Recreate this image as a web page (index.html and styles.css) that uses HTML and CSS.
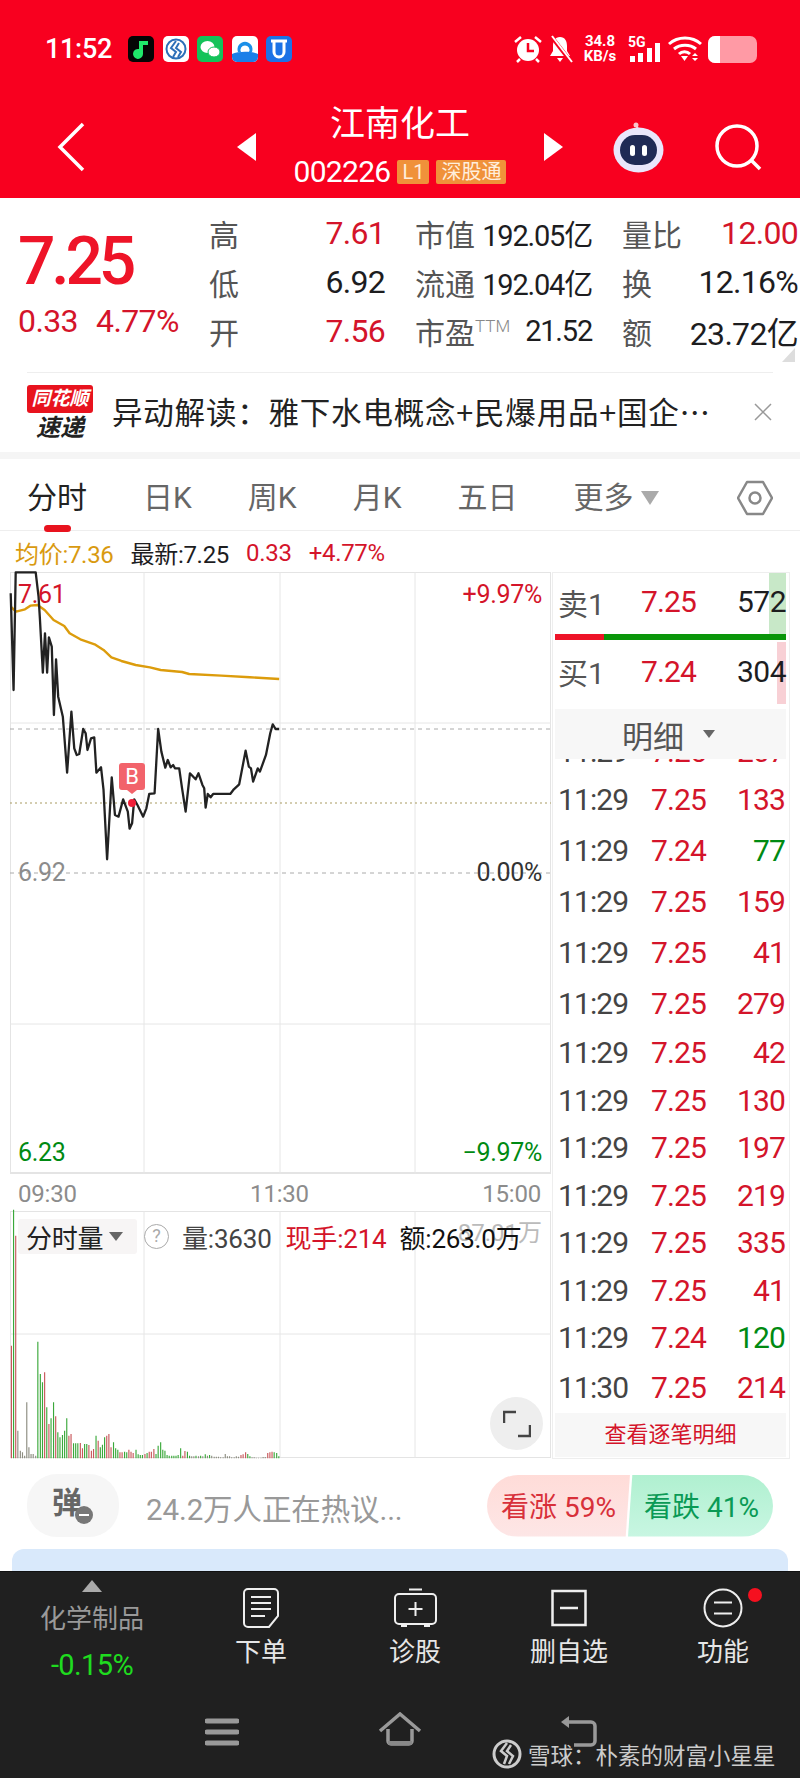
FILE: index.html
```html
<!DOCTYPE html>
<html lang="zh-CN">
<head>
    <meta charset="UTF-8">
    <title>江南化工</title>
    <link rel="stylesheet" href="styles.css">
</head>
<body>
<div class="page">

    <header class="header">
        <div class="status">
            <span class="clock">11:52</span>
            <div class="apps">
                <svg class="app" viewBox="0 0 26 26"><rect width="26" height="26" rx="5" fill="#050505"/><path d="M11 5h9v4h-5v9a5 5 0 1 1-4-5z" fill="#1fe86a"/></svg>
                <svg class="app" viewBox="0 0 26 26"><rect width="26" height="26" rx="5" fill="#fff"/><circle cx="13" cy="13" r="9.5" fill="none" stroke="#2d6fb8" stroke-width="2"/><path d="M13 5 8 12l5 4-3 5M16 7l-3 5 5 4-3 5" fill="none" stroke="#2d6fb8" stroke-width="2"/></svg>
                <svg class="app" viewBox="0 0 26 26"><rect width="26" height="26" rx="5" fill="#14c35a"/><ellipse cx="10.5" cy="11" rx="7" ry="6" fill="#fff"/><ellipse cx="17" cy="16" rx="6" ry="5" fill="#fff" stroke="#14c35a"/></svg>
                <svg class="app" viewBox="0 0 26 26"><rect width="26" height="26" rx="5" fill="#fff"/><path d="M0 18c6-3 20-3 26 0v3a5 5 0 0 1-5 5H5a5 5 0 0 1-5-5z" fill="#1a7fe8"/><path d="M6 16a7.5 7.5 0 1 1 14 0h-3a4.5 4.5 0 1 0-8 0z" fill="#1a8fe8"/></svg>
                <svg class="app" viewBox="0 0 26 26"><rect width="26" height="26" rx="5" fill="#1c72e6"/><path d="M8 6v10a5 5 0 0 0 10 0V6M5 5h16" fill="none" stroke="#fff" stroke-width="3"/></svg>
            </div>
            <div class="sysicons">
                <svg class="alarm" viewBox="0 0 30 28"><circle cx="15" cy="15" r="11" fill="#fff"/><path d="M15 8v8h6" fill="none" stroke="#f8001f" stroke-width="2.5"/><path d="M2 7l6-5M28 7l-6-5M7 24l-3 3M23 24l3 3" stroke="#fff" stroke-width="2.5"/></svg>
                <svg class="bell" viewBox="0 0 25 28"><path d="M12 2c5 0 7 4 7 9v5l3 5H2l3-5v-5c0-5 2-9 7-9zM9 23h6l-3 4z" fill="#fff"/><path d="M3 1l20 26" stroke="#f8001f" stroke-width="4"/><path d="M4 1l20 26" stroke="#fff" stroke-width="2"/></svg>
                <div class="speed"><span>34.8</span><span>KB/s</span></div>
                <div class="signal">
                    <span class="five-g">5G</span>
                    <svg class="bars" viewBox="0 0 30 19"><path d="M0 13h5v6H0zM8 10h5v9H8zM17 5h5v14h-5zM25 0h5v19h-5z" fill="#fff"/></svg>
                </div>
                <svg class="wifi" viewBox="0 0 34 26"><g fill="none" stroke="#fff" stroke-width="3"><path d="M1 8c9-8 23-8 32 0"/><path d="M6 13c6-5 16-5 22 0"/><path d="M11 18c3-3 8-3 11 0"/></g><path d="M13 20h7l-3.5 5z" fill="#fff"/><path d="M24 20l3-3 3 3zM24 22h6l-3 3z" fill="#fff"/></svg>
                <div class="battery"><div class="battery-level"></div></div>
            </div>
        </div>
        <nav class="nav">
            <svg class="back" viewBox="0 0 28 50"><path d="M26 2 3 25l23 23" fill="none" stroke="#fff" stroke-width="3.5"/></svg>
            <span class="tri tri-left"></span>
            <div class="stock">
                <div class="stock-name">江南化工</div>
                <div class="stock-code">
                    <span class="code">002226</span>
                    <span class="badge badge-l1">L1</span>
                    <span class="badge badge-sz">深股通</span>
                </div>
            </div>
            <span class="tri tri-right"></span>
            <svg class="robot" viewBox="0 0 53 52"><circle cx="24" cy="4" r="2.5" fill="#f9c6cc"/><path d="M24 4c1 3 2 4 3 5" stroke="#f9c6cc" stroke-width="2" fill="none"/><ellipse cx="26.5" cy="29" rx="25" ry="22.5" fill="#e9e6fb"/><rect x="8" y="14" width="37" height="30" rx="15" fill="#1f2a55"/><rect x="18" y="24" width="5" height="11" rx="2.5" fill="#fff"/><rect x="30" y="24" width="5" height="11" rx="2.5" fill="#fff"/></svg>
            <svg class="search" viewBox="0 0 47 47"><circle cx="22" cy="22" r="20" fill="none" stroke="#fff" stroke-width="3.5"/><path d="M36 36l9 9" stroke="#fff" stroke-width="3.5"/></svg>
        </nav>
    </header>

    <section class="quote">
        <div class="price-box">
            <div class="price">7.25</div>
            <div class="change"><span>0.33</span><span>4.77%</span></div>
        </div>
        <div class="stats">
            <div class="stat"><span class="stat-label">高</span><span class="num red">7.61</span></div>
            <div class="stat"><span class="stat-label">市值</span><span class="num dark small">192.05亿</span></div>
            <div class="stat"><span class="stat-label">量比</span><span class="num red">12.00</span></div>
            <div class="stat"><span class="stat-label">低</span><span class="num dark">6.92</span></div>
            <div class="stat"><span class="stat-label">流通</span><span class="num dark small">192.04亿</span></div>
            <div class="stat"><span class="stat-label">换</span><span class="num dark">12.16%</span></div>
            <div class="stat"><span class="stat-label">开</span><span class="num red">7.56</span></div>
            <div class="stat"><span class="stat-label">市盈<sup class="ttm">TTM</sup></span><span class="num dark small">21.52</span></div>
            <div class="stat"><span class="stat-label">额</span><span class="num dark">23.72亿</span></div>
        </div>
        <span class="corner"></span>
    </section>

    <section class="news">
        <div class="news-logo">
            <div class="news-logo-top">同花顺</div>
            <div class="news-logo-bottom">速递</div>
        </div>
        <div class="news-text">异动解读：雅下水电概念+民爆用品+国企⋯</div>
        <svg class="news-close" viewBox="0 0 18 18"><path d="M1 1l16 16M17 1 1 17" stroke="#999" stroke-width="1.5"/></svg>
    </section>

    <nav class="tabs">
        <span class="tab active">分时</span>
        <span class="tab">日K</span>
        <span class="tab">周K</span>
        <span class="tab">月K</span>
        <span class="tab">五日</span>
        <span class="tab">更多<i class="tab-arrow"></i></span>
        <svg class="tab-gear" viewBox="0 0 36 36"><path d="M10 2h16l9 16-9 16H10L1 18z" fill="none" stroke="#888" stroke-width="2.5" stroke-linejoin="round"/><circle cx="18" cy="18" r="5.5" fill="none" stroke="#888" stroke-width="2.5"/></svg>
    </nav>

    <div class="main">
        <div class="charts">
            <div class="legend">
                <span class="orange">均价:7.36</span>
                <span class="dark">最新:7.25</span>
                <span class="red">0.33</span>
                <span class="red">+4.77%</span>
            </div>

            <div class="plot">
                <svg class="plot-svg" viewBox="0 0 541 602">
                    <path class="grid" d="M134 0V602M270 0V602M405 0V602M0 151H541M0 452H541"/>
                    <path class="dash-grey" d="M0 157H541M0 301H541"/>
                    <path class="dash-gold" d="M0 231H541"/>
                    <g transform="translate(-10 -32) scale(.357 .3333)">
                        <path class="avg-line" d="M30 200 45 215 70 208 85 197 105 195 125 210 150 240 180 258 195 280 225 298 265 313 290 330 312 352 340 363 380 375 420 382 450 390 510 396 530 402 620 407 700 412 782 417"/>
                        <path class="price-line" d="M30 160 38 450 44 97 100 97 108 170 112 240 120 398 126 280 132 398 137 292 145 320 151 525 157 358 163 470 176 530 188 698 200 515 208 625 215 645 222 642 233 567 240 580 245 630 255 595 264 592 270 698 283 682 290 750 300 958 313 712 322 825 332 830 345 778 358 815 363 866 370 850 376 778 385 795 401 830 410 805 418 762 433 760 443 567 452 635 463 683 470 660 478 682 485 675 490 685 502 685 510 745 520 815 532 700 548 718 556 700 567 735 572 745 576 803 582 762 590 772 597 762 645 762 655 748 670 733 688 632 697 680 703 685 709 725 722 685 728 695 745 645 757 580 764 553 772 567 782 567"/>
                    </g>
                    <circle cx="122" cy="231" r="4" fill="#f0203a"/>
                </svg>
                <span class="plot-label tl red">7.61</span>
                <span class="plot-label tr red">+9.97%</span>
                <span class="plot-label ml grey">6.92</span>
                <span class="plot-label mr">0.00%</span>
                <span class="plot-label bl green">6.23</span>
                <span class="plot-label br green">−9.97%</span>
                <span class="buy-mark">B</span>
            </div>

            <div class="axis"><span>09:30</span><span>11:30</span><span>15:00</span></div>

            <div class="volume">
                <svg class="plot-svg" viewBox="0 0 541 247">
                    <path class="grid" d="M134 0V247M270 0V247M405 0V247M0 123H541"/>
                    <g transform="translate(-10 -32) scale(.357 .3333)">
                        <path class="vol-bar vol-red" d="M32 500V838M44 170V838M125 580V838M137 735V838M156 712V838M193 770V838M199 765V838M225 792V838M231 808V838M249 798V838M256 815V838M262 810V838M275 785V838M299 770V838M305 765V838M311 805V838M336 820V838M342 820V838M361 812V838M367 818V838M373 822V838M406 825V838M418 818V838M424 818V838M431 810V838M512 830V838M518 816V838M675 828V838M681 826V838M688 820V838M750 822V838M756 820V838M762 818V838"/>
                        <path class="vol-bar vol-green" d="M38 92V838M106 488V838M113 585V838M119 610V838M131 685V838M143 718V838M150 670V838M162 760V838M168 775V838M175 768V838M181 755V838M187 718V838M206 793V838M212 793V838M218 793V838M237 795V838M243 795V838M269 770V838M281 805V838M287 797V838M293 775V838M318 790V838M324 808V838M330 812V838M349 818V838M355 820V838M381 812V838M387 826V838M393 828V838M399 828V838M412 822V838M437 825V838M443 800V838M450 790V838M456 812V838M462 815V838M468 828V838M474 830V838M481 830V838M487 830V838M493 830V838M499 828V838M506 808V838M525 818V838M531 830V838M549 830V838M562 830V838M575 826V838M587 828V838M694 825V838M700 832V838M768 820V838M775 822V838M781 832V838"/>
                        <path class="vol-bar vol-grey" d="M50 755V838M57 815V838M63 820V838M69 830V838M75 670V838M81 805V838M87 825V838M93 825V838M100 830V838M537 832V838M543 832V838M556 832V838M568 832V838M581 830V838M593 830V838M600 833V838M606 833V838M612 833V838M618 835V838M625 835V838M631 825V838M637 832V838M643 832V838M649 835V838M656 835V838M662 832V838M668 833V838M706 835V838M712 835V838M718 836V838M724 836V838M731 836V838M737 834V838M743 834V838"/>
                    </g>
                </svg>
                <span class="vol-ghost">87.01万</span>
                <div class="vol-head">
                    <span class="vol-type">分时量<i class="vol-arrow"></i></span>
                    <span class="vol-help">?</span>
                    <span class="vol-num">量:3630</span>
                    <span class="vol-now red">现手:214</span>
                    <span class="vol-amount">额:263.0万</span>
                </div>
                <div class="fullscreen">
                    <svg viewBox="0 0 28 28"><path d="M1 13V2h12M27 15v11H15" fill="none" stroke="#444" stroke-width="2.5"/></svg>
                </div>
            </div>
        </div>

        <aside class="side">
            <div class="book book-sell">
                <span class="book-depth depth-green"></span>
                <span class="book-label">卖1</span><span class="book-price red">7.25</span><span class="book-vol">572</span>
            </div>
            <div class="book-bar"><span class="book-bar-red"></span></div>
            <div class="book book-buy">
                <span class="book-depth depth-pink"></span>
                <span class="book-label">买1</span><span class="book-price red">7.24</span><span class="book-vol">304</span>
            </div>
            <div class="detail-head">明细<i class="detail-arrow"></i></div>
            <div class="trades">
                <div class="trade first"><span class="t">11:29</span><span class="p">7.25</span><span class="v red">207</span></div>
                <div class="trade"><span class="t">11:29</span><span class="p">7.25</span><span class="v red">133</span></div>
                <div class="trade"><span class="t">11:29</span><span class="p">7.24</span><span class="v green">77</span></div>
                <div class="trade"><span class="t">11:29</span><span class="p">7.25</span><span class="v red">159</span></div>
                <div class="trade"><span class="t">11:29</span><span class="p">7.25</span><span class="v red">41</span></div>
                <div class="trade"><span class="t">11:29</span><span class="p">7.25</span><span class="v red">279</span></div>
                <div class="trade tight"><span class="t">11:29</span><span class="p">7.25</span><span class="v red">42</span></div>
                <div class="trade tight"><span class="t">11:29</span><span class="p">7.25</span><span class="v red">130</span></div>
                <div class="trade tight"><span class="t">11:29</span><span class="p">7.25</span><span class="v red">197</span></div>
                <div class="trade tight"><span class="t">11:29</span><span class="p">7.25</span><span class="v red">219</span></div>
                <div class="trade tight"><span class="t">11:29</span><span class="p">7.25</span><span class="v red">335</span></div>
                <div class="trade tight"><span class="t">11:29</span><span class="p">7.25</span><span class="v red">41</span></div>
                <div class="trade tight"><span class="t">11:29</span><span class="p">7.24</span><span class="v green">120</span></div>
                <div class="trade"><span class="t">11:30</span><span class="p">7.25</span><span class="v red">214</span></div>
            </div>
            <div class="detail-link">查看逐笔明细</div>
        </aside>
    </div>

    <section class="talk">
        <div class="danmu">弹<span class="danmu-minus"></span></div>
        <div class="talk-text">24.2万人正在热议...</div>
        <div class="vote">
            <span class="vote-up">看涨 59%</span>
            <span class="vote-down">看跌 41%</span>
        </div>
    </section>
    <div class="blue-card"></div>

    <footer class="footer">
        <div class="actions">
            <div class="sector">
                <span class="sector-arrow"></span>
                <span class="sector-name">化学制品</span>
                <span class="sector-change">-0.15%</span>
            </div>
            <div class="action">
                <svg class="action-icon" width="36" height="40" viewBox="0 0 36 40"><path d="M5 1h26a4 4 0 0 1 4 4v23l-9 11H5a4 4 0 0 1-4-4V5a4 4 0 0 1 4-4zM8 9h20M8 15h20M8 21h20M8 28h14" fill="none" stroke="#eee" stroke-width="2"/></svg>
                <span>下单</span>
            </div>
            <div class="action">
                <svg class="action-icon" width="45" height="40" viewBox="0 0 45 40"><path d="M16 1.5h13M6 6h33a4 4 0 0 1 4 4v22a4 4 0 0 1-4 4H6a4 4 0 0 1-4-4V10a4 4 0 0 1 4-4zM8 38h6M31 38h6M22.5 14v14M15.500 21h14" fill="none" stroke="#eee" stroke-width="2"/></svg>
                <span>诊股</span>
            </div>
            <div class="action">
                <svg class="action-icon" width="36" height="40" viewBox="0 0 36 40"><path d="M1.5 3h33v34h-33zM9 20h18" fill="none" stroke="#eee" stroke-width="2.5"/></svg>
                <span>删自选</span>
            </div>
            <div class="action">
                <svg class="action-icon" width="40" height="40" viewBox="0 0 40 40"><circle cx="20" cy="20" r="18.5" fill="none" stroke="#eee" stroke-width="2"/><path d="M11 14.5h18M11 25.5h18" stroke="#eee" stroke-width="2"/></svg>
                <span class="red-dot"></span>
                <span>功能</span>
            </div>
        </div>
        <div class="sysnav">
            <svg class="nav-menu" viewBox="0 0 34 28"><path d="M2 3h30M2 14h30M2 25h30" stroke="#999" stroke-width="5" stroke-linecap="round"/></svg>
            <svg class="nav-home" viewBox="0 0 44 34"><path d="M2 19 22 2l20 17M10 17v12a3 3 0 0 0 3 3h18a3 3 0 0 0 3-3V17" fill="none" stroke="#999" stroke-width="3.5"/><path d="M10 31h24" stroke="#888" stroke-width="4"/></svg>
            <svg class="nav-back" viewBox="0 0 38 32"><path d="M9 1 1 7l8 6z" fill="#999"/><path d="M6 7h25a4 4 0 0 1 4 4v15a4 4 0 0 1-4 4H14" fill="none" stroke="#999" stroke-width="3.5"/></svg>
        </div>
        <div class="watermark">
            <svg viewBox="0 0 30 30"><circle cx="15" cy="15" r="13" fill="none" stroke="#ccc" stroke-width="3"/><path d="M15 4 9 12l6 5-3 8M19 6l-4 6 6 5-4 8" fill="none" stroke="#ccc" stroke-width="2.5"/></svg>
            <span>雪球：朴素的财富小星星</span>
        </div>
    </footer>
</div>
</body>
</html>
```

FILE: styles.css
```css
* {
    margin: 0;
    padding: 0;
    box-sizing: border-box;
}
body {
    font-family: Roboto, "Noto Sans CJK SC", sans-serif;
    background: #fff;
    color: #222;
}
.page {
    position: relative;
    width: 800px;
    height: 1778px;
    overflow: hidden;
    background: #fff;
}
.red { color: #d4142a; }
.green { color: #008a12; }
.grey { color: #8c8c8c; }
.dark { color: #1d1d1f; }
.orange { color: #d99a10; }

/* header */
.header {
    height: 198px;
    background: #f8001f;
    color: #fff;
}
.status {
    display: flex;
    align-items: center;
    height: 62px;
    padding: 36px 0 0 45px;
}
.clock {
    width: 83px;
    font-size: 27px;
    font-weight: 500;
    letter-spacing: -0.3px;
}
.apps {
    display: flex;
    gap: 8.5px;
}
.app {
    width: 26px;
    height: 26px;
}
.sysicons {
    display: flex;
    align-items: center;
    margin-left: 221px;
}
.alarm { width: 30px; height: 28px; }
.bell { width: 25px; height: 28px; margin-left: 5px; }
.speed {
    display: flex;
    flex-direction: column;
    align-items: center;
    width: 36px;
    margin-left: 9px;
    font-size: 15px;
    font-weight: 700;
    line-height: 15px;
}
.signal {
    position: relative;
    width: 32px;
    height: 26px;
    margin-left: 10px;
}
.five-g {
    position: absolute;
    top: -2px;
    left: 0;
    font-size: 14px;
    font-weight: 700;
}
.bars {
    position: absolute;
    right: 0;
    bottom: 0;
    width: 30px;
    height: 19px;
}
.wifi { width: 34px; height: 26px; margin-left: 8px; }
.battery {
    width: 49px;
    height: 27px;
    margin-left: 6px;
    border-radius: 7px;
    overflow: hidden;
    background: #ff9aa5;
}
.battery-level {
    width: 12px;
    height: 100%;
    background: #fff;
}
.nav {
    display: flex;
    align-items: center;
    height: 90px;
    margin-top: 40px;
    padding-left: 57px;
}
.back { width: 28px; height: 50px; flex: none; }
.tri {
    flex: none;
    width: 0;
    height: 0;
    border-top: 14px solid transparent;
    border-bottom: 14px solid transparent;
}
.tri-left {
    margin-left: 152px;
    border-right: 19px solid #fff;
}
.tri-right {
    border-left: 19px solid #fff;
}
.stock {
    flex: none;
    width: 288px;
    margin-top: -3px;
    text-align: center;
}
.stock-name {
    height: 52px;
    font-size: 35px;
    line-height: 44px;
}
.stock-code {
    display: flex;
    align-items: center;
    justify-content: center;
    gap: 7px;
    height: 34px;
}
.code {
    font-size: 30px;
    letter-spacing: -0.7px;
}
.badge {
    height: 24px;
    padding: 0 5px;
    border-radius: 2px;
    background: #f0913a;
    color: #ffeedd;
    font-size: 20px;
    line-height: 24px;
}
.robot { width: 53px; height: 52px; margin-left: 49px; flex: none; }
.search { width: 47px; height: 47px; margin-left: 50px; flex: none; }

/* quote */
.quote {
    position: relative;
    display: flex;
    height: 174px;
    padding: 10px 0 0 18px;
}
.price-box { width: 191px; flex: none; }
.price {
    height: 86px;
    margin-top: 2px;
    color: #ee1428;
    font-size: 66px;
    font-weight: 500;
    line-height: 104px;
    letter-spacing: -4.2px;
}
.change {
    display: flex;
    gap: 18px;
    margin-top: 5px;
    color: #d4142a;
    font-size: 32px;
    line-height: 40px;
    letter-spacing: -0.6px;
}
.stats {
    display: grid;
    grid-template-columns: 176px 177px 176px;
    grid-auto-rows: 49px;
    column-gap: 30px;
    width: 589px;
    flex: none;
}
.stat {
    display: flex;
    align-items: center;
    justify-content: space-between;
    white-space: nowrap;
}
.stat-label {
    color: #555;
    font-size: 30px;
}
.num {
    font-size: 32px;
    letter-spacing: -0.7px;
}
.num.small {
    font-size: 29px;
    letter-spacing: -1.2px;
}
.ttm {
    color: #888;
    font-size: 17px;
    font-weight: 300;
    vertical-align: 12px;
    line-height: 0;
}
.corner {
    position: absolute;
    right: 5px;
    bottom: 10px;
    width: 0;
    height: 0;
    border-left: 13px solid transparent;
    border-bottom: 14px solid #ddd;
}

/* news */
.news {
    position: relative;
    display: flex;
    align-items: center;
    height: 80px;
    margin: 0 27px;
    border-top: 1px solid #eee;
}
.news-logo {
    flex: none;
    width: 66px;
    text-align: center;
}
.news-logo-top {
    height: 28px;
    border-radius: 3px;
    background: #e8131e;
    color: #fff;
    font-size: 19px;
    font-weight: 700;
    font-style: italic;
    line-height: 28px;
    white-space: nowrap;
}
.news-logo-bottom {
    margin-top: 2px;
    color: #222;
    font-size: 24px;
    font-weight: 700;
    font-style: italic;
    line-height: 26px;
}
.news-text {
    margin: -4px 0 0 19px;
    font-family: "Noto Sans CJK SC", sans-serif;
    font-size: 30.5px;
    letter-spacing: 0.8px;
    white-space: nowrap;
    line-height: 44px;
}
.news-close {
    position: absolute;
    right: 1px;
    top: 30px;
    width: 18px;
    height: 18px;
}

/* tabs */
.tabs {
    display: flex;
    align-items: center;
    gap: 56px;
    height: 79px;
    padding: 7px 27px 0 27px;
    border-top: 7px solid #f5f5f5;
    border-bottom: 1px solid #eee;
}
.tab {
    position: relative;
    display: flex;
    align-items: center;
    color: #666;
    font-size: 30px;
    line-height: 40px;
    white-space: nowrap;
}
.tab.active { color: #222; }
.tab.active::after {
    content: "";
    position: absolute;
    left: 17px;
    bottom: -14px;
    width: 27px;
    height: 7px;
    border-radius: 4px;
    background: #e8131e;
}
.tab-arrow {
    margin-left: 8px;
    border-left: 9px solid transparent;
    border-right: 9px solid transparent;
    border-top: 14px solid #aaa;
}
.tab-gear {
    width: 36px;
    height: 36px;
    margin-left: auto;
}

/* charts */
.main {
    display: flex;
    height: 928px;
}
.charts {
    flex: none;
    width: 552px;
}
.legend {
    display: flex;
    align-items: center;
    gap: 17px;
    height: 41px;
    padding: 2px 0 0 15px;
    font-size: 24px;
    letter-spacing: -0.3px;
}
.plot {
    position: relative;
    width: 541px;
    height: 602px;
    margin-left: 10px;
    border: 1px solid #e4e4e4;
    border-bottom-width: 2px;
}
.plot-svg {
    position: absolute;
    top: -1px;
    left: -1px;
    width: 541px;
    height: 602px;
    overflow: visible;
}
.volume .plot-svg { height: 247px; }
.grid {
    fill: none;
    stroke: #e6e6e6;
    stroke-width: 1;
}
.dash-grey {
    fill: none;
    stroke: #aaa;
    stroke-width: 1;
    stroke-dasharray: 4 4;
}
.dash-gold {
    fill: none;
    stroke: #a89a60;
    stroke-width: 1;
    stroke-dasharray: 2 3;
}
.avg-line, .price-line {
    fill: none;
    vector-effect: non-scaling-stroke;
    stroke-linejoin: round;
}
.avg-line {
    stroke: #dc9c0c;
    stroke-width: 2.4px;
}
.price-line {
    stroke: #222;
    stroke-width: 2.3px;
}
.plot-label {
    position: absolute;
    font-size: 25px;
    line-height: 28px;
    letter-spacing: -0.3px;
}
.tl { left: 7px; top: 8px; }
.tr { right: 8px; top: 8px; }
.ml { left: 7px; top: 286px; }
.mr { right: 8px; top: 286px; color: #333; }
.bl { left: 7px; top: 566px; }
.br { right: 8px; top: 566px; }
.buy-mark {
    position: absolute;
    left: 108px;
    top: 190px;
    width: 26px;
    height: 27px;
    border-radius: 3px;
    background: #f2636b;
    color: #fff;
    font-size: 22px;
    line-height: 27px;
    text-align: center;
}
.buy-mark::after {
    content: "";
    position: absolute;
    left: 8px;
    bottom: -4px;
    border-left: 5px solid transparent;
    border-right: 5px solid transparent;
    border-top: 4px solid #f2636b;
}
.axis {
    display: flex;
    justify-content: space-between;
    align-items: center;
    height: 37px;
    padding: 3px 11px 0 18px;
    color: #8c8c8c;
    font-size: 24px;
    letter-spacing: -0.2px;
}
.volume {
    position: relative;
    width: 541px;
    height: 247px;
    margin-left: 10px;
    border: 1px solid #e4e4e4;
}
.vol-bar {
    fill: none;
    stroke-width: 3.2;
}
.vol-red { stroke: #c8575a; }
.vol-green { stroke: #3aa83a; }
.vol-grey { stroke: #8c8c80; }
.vol-ghost {
    position: absolute;
    right: 8px;
    top: 7px;
    color: #bbb;
    font-size: 24px;
    line-height: 28px;
}
.vol-head {
    position: absolute;
    top: 7px;
    left: 7px;
    display: flex;
    align-items: center;
    height: 35px;
    font-size: 26px;
    letter-spacing: -0.2px;
    white-space: nowrap;
}
.vol-type {
    display: flex;
    align-items: center;
    width: 119px;
    height: 35px;
    padding-left: 8px;
    border-radius: 3px;
    background: #f7f5f5;
    color: #222;
}
.vol-arrow {
    margin-left: 6px;
    border-left: 7px solid transparent;
    border-right: 7px solid transparent;
    border-top: 9px solid #666;
}
.vol-help {
    width: 25px;
    height: 25px;
    margin-left: 7px;
    border: 1.5px solid #aaa;
    border-radius: 50%;
    color: #aaa;
    font-size: 18px;
    line-height: 22px;
    text-align: center;
}
.vol-num { margin-left: 13px; color: #444; }
.vol-now { margin-left: 14px; }
.vol-amount { margin-left: 13px; color: #111; }
.fullscreen {
    position: absolute;
    left: 479px;
    top: 185px;
    display: flex;
    align-items: center;
    justify-content: center;
    width: 53px;
    height: 53px;
    border-radius: 50%;
    background: #eee;
}
.fullscreen svg { width: 28px; height: 28px; }

/* right panel */
.side {
    flex: none;
    width: 238px;
    height: 887px;
    margin-top: 41px;
    padding: 0 3px 0 2px;
    border: 1px solid #eee;
}
.book {
    position: relative;
    display: flex;
    align-items: center;
    height: 61px;
    padding: 0 0 4px 3px;
    font-size: 30px;
    white-space: nowrap;
}
.book-depth {
    position: absolute;
    top: 0;
    right: 0;
    height: 100%;
}
.depth-green { width: 17px; background: #c8e8c8; }
.depth-pink { width: 9px; background: #f8d0d5; }
.book-label { position: relative; width: 83px; color: #555; }
.book-price { position: relative; width: 53px; letter-spacing: -0.9px; }
.book-vol {
    position: relative;
    margin-left: auto;
    color: #1d1d1f;
    letter-spacing: -0.5px;
}
.book-bar {
    height: 6px;
    background: #0a960a;
}
.book-bar-red {
    display: block;
    width: 49px;
    height: 100%;
    background: #ee1428;
}
.book-buy { height: 62px; margin-top: 2px; }
.detail-head {
    display: flex;
    align-items: center;
    justify-content: center;
    height: 50px;
    margin-top: 5px;
    padding-right: 4px;
    background: #f7f7f7;
    color: #555;
    font-size: 31px;
}
.detail-arrow {
    margin-left: 19px;
    border-left: 6px solid transparent;
    border-right: 6px solid transparent;
    border-top: 8px solid #666;
}
.trades {
    height: 654px;
    overflow: hidden;
}
.trade {
    display: grid;
    grid-template-columns: 93px 53px 1fr;
    align-items: center;
    height: 51px;
    padding: 0 1px 0 3px;
    font-size: 30px;
    letter-spacing: -0.9px;
}
.trade.first { height: 45px; margin-top: -30px; }
.trade.tight { height: 47.5px; }
.trade .t { color: #444; }
.trade .p { color: #d4142a; }
.trade .v { text-align: right; }
.detail-link {
    height: 44px;
    background: #f7f7f7;
    color: #d4142a;
    font-size: 22px;
    line-height: 44px;
    text-align: center;
}

/* talk row */
.talk {
    display: flex;
    align-items: center;
    height: 87px;
    margin-top: 3px;
    padding: 0 27px;
}
.danmu {
    position: relative;
    flex: none;
    width: 92px;
    height: 63px;
    padding-left: 25px;
    border-radius: 30px;
    background: #f6f6f6;
    color: #666;
    font-size: 30px;
    font-weight: 700;
    line-height: 58px;
}
.danmu-minus {
    position: absolute;
    left: 48px;
    top: 32px;
    width: 18px;
    height: 18px;
    border-radius: 50%;
    background: #777;
}
.danmu-minus::after {
    content: "";
    position: absolute;
    left: 4px;
    top: 8px;
    width: 10px;
    height: 2px;
    background: #fff;
}
.talk-text {
    margin: 2px 0 0 27px;
    color: #999;
    font-size: 29.5px;
    letter-spacing: -0.1px;
}
.vote {
    display: flex;
    height: 62px;
    margin-left: auto;
    font-size: 28px;
    line-height: 66px;
    white-space: nowrap;
}
.vote-up {
    width: 143px;
    padding-left: 14px;
    border-radius: 31px 0 0 31px;
    background: linear-gradient(#ffdcd8, #fde6e6);
    color: #d8303a;
    clip-path: polygon(0 0, 100% 0, 97% 100%, 0 100%);
}
.vote-down {
    width: 145px;
    margin-left: -2px;
    padding-left: 16px;
    border-radius: 0 31px 31px 0;
    background: linear-gradient(#b0f0d0, #c8f6e2);
    color: #0a9a55;
    clip-path: polygon(3% 0, 100% 0, 100% 100%, 0 100%);
}
.blue-card {
    height: 40px;
    margin: 0 12px;
    border-radius: 12px 12px 0 0;
    background: #d9e9fb;
}

/* footer */
.footer {
    position: absolute;
    left: 0;
    bottom: 0;
    width: 800px;
    height: 207px;
    border-top: 1px solid #111;
    background: #202020;
    color: #e6e6e6;
}
.actions {
    display: flex;
    height: 140px;
}
.sector {
    display: flex;
    flex-direction: column;
    align-items: center;
    width: 184px;
    padding-top: 8px;
}
.sector-arrow {
    border-left: 10px solid transparent;
    border-right: 10px solid transparent;
    border-bottom: 12px solid #aaa;
}
.sector-name {
    margin-top: 8px;
    color: #999;
    font-size: 26px;
    line-height: 38px;
}
.sector-change {
    margin-top: 8px;
    color: #1fdc1f;
    font-size: 29px;
    line-height: 38px;
    letter-spacing: -0.6px;
}
.action {
    position: relative;
    display: flex;
    flex-direction: column;
    align-items: center;
    width: 154px;
    padding-top: 16px;
    font-size: 26px;
    line-height: 34px;
}
.action-icon { margin-bottom: 7px; }
.red-dot {
    position: absolute;
    left: 102px;
    top: 16px;
    width: 14px;
    height: 14px;
    border-radius: 50%;
    background: #f5101f;
}
.sysnav {
    display: flex;
    align-items: flex-start;
    padding-left: 205px;
}
.nav-menu { width: 34px; height: 28px; margin-top: 6px; }
.nav-home { width: 44px; height: 34px; margin-left: 139px; }
.nav-back { width: 38px; height: 32px; margin: 3px 0 0 138px; }
.watermark {
    position: absolute;
    left: 492px;
    top: 166px;
    display: flex;
    align-items: center;
    gap: 6px;
    color: #ccc;
    font-size: 22.5px;
    white-space: nowrap;
}
.watermark svg { width: 30px; height: 30px; }
```
